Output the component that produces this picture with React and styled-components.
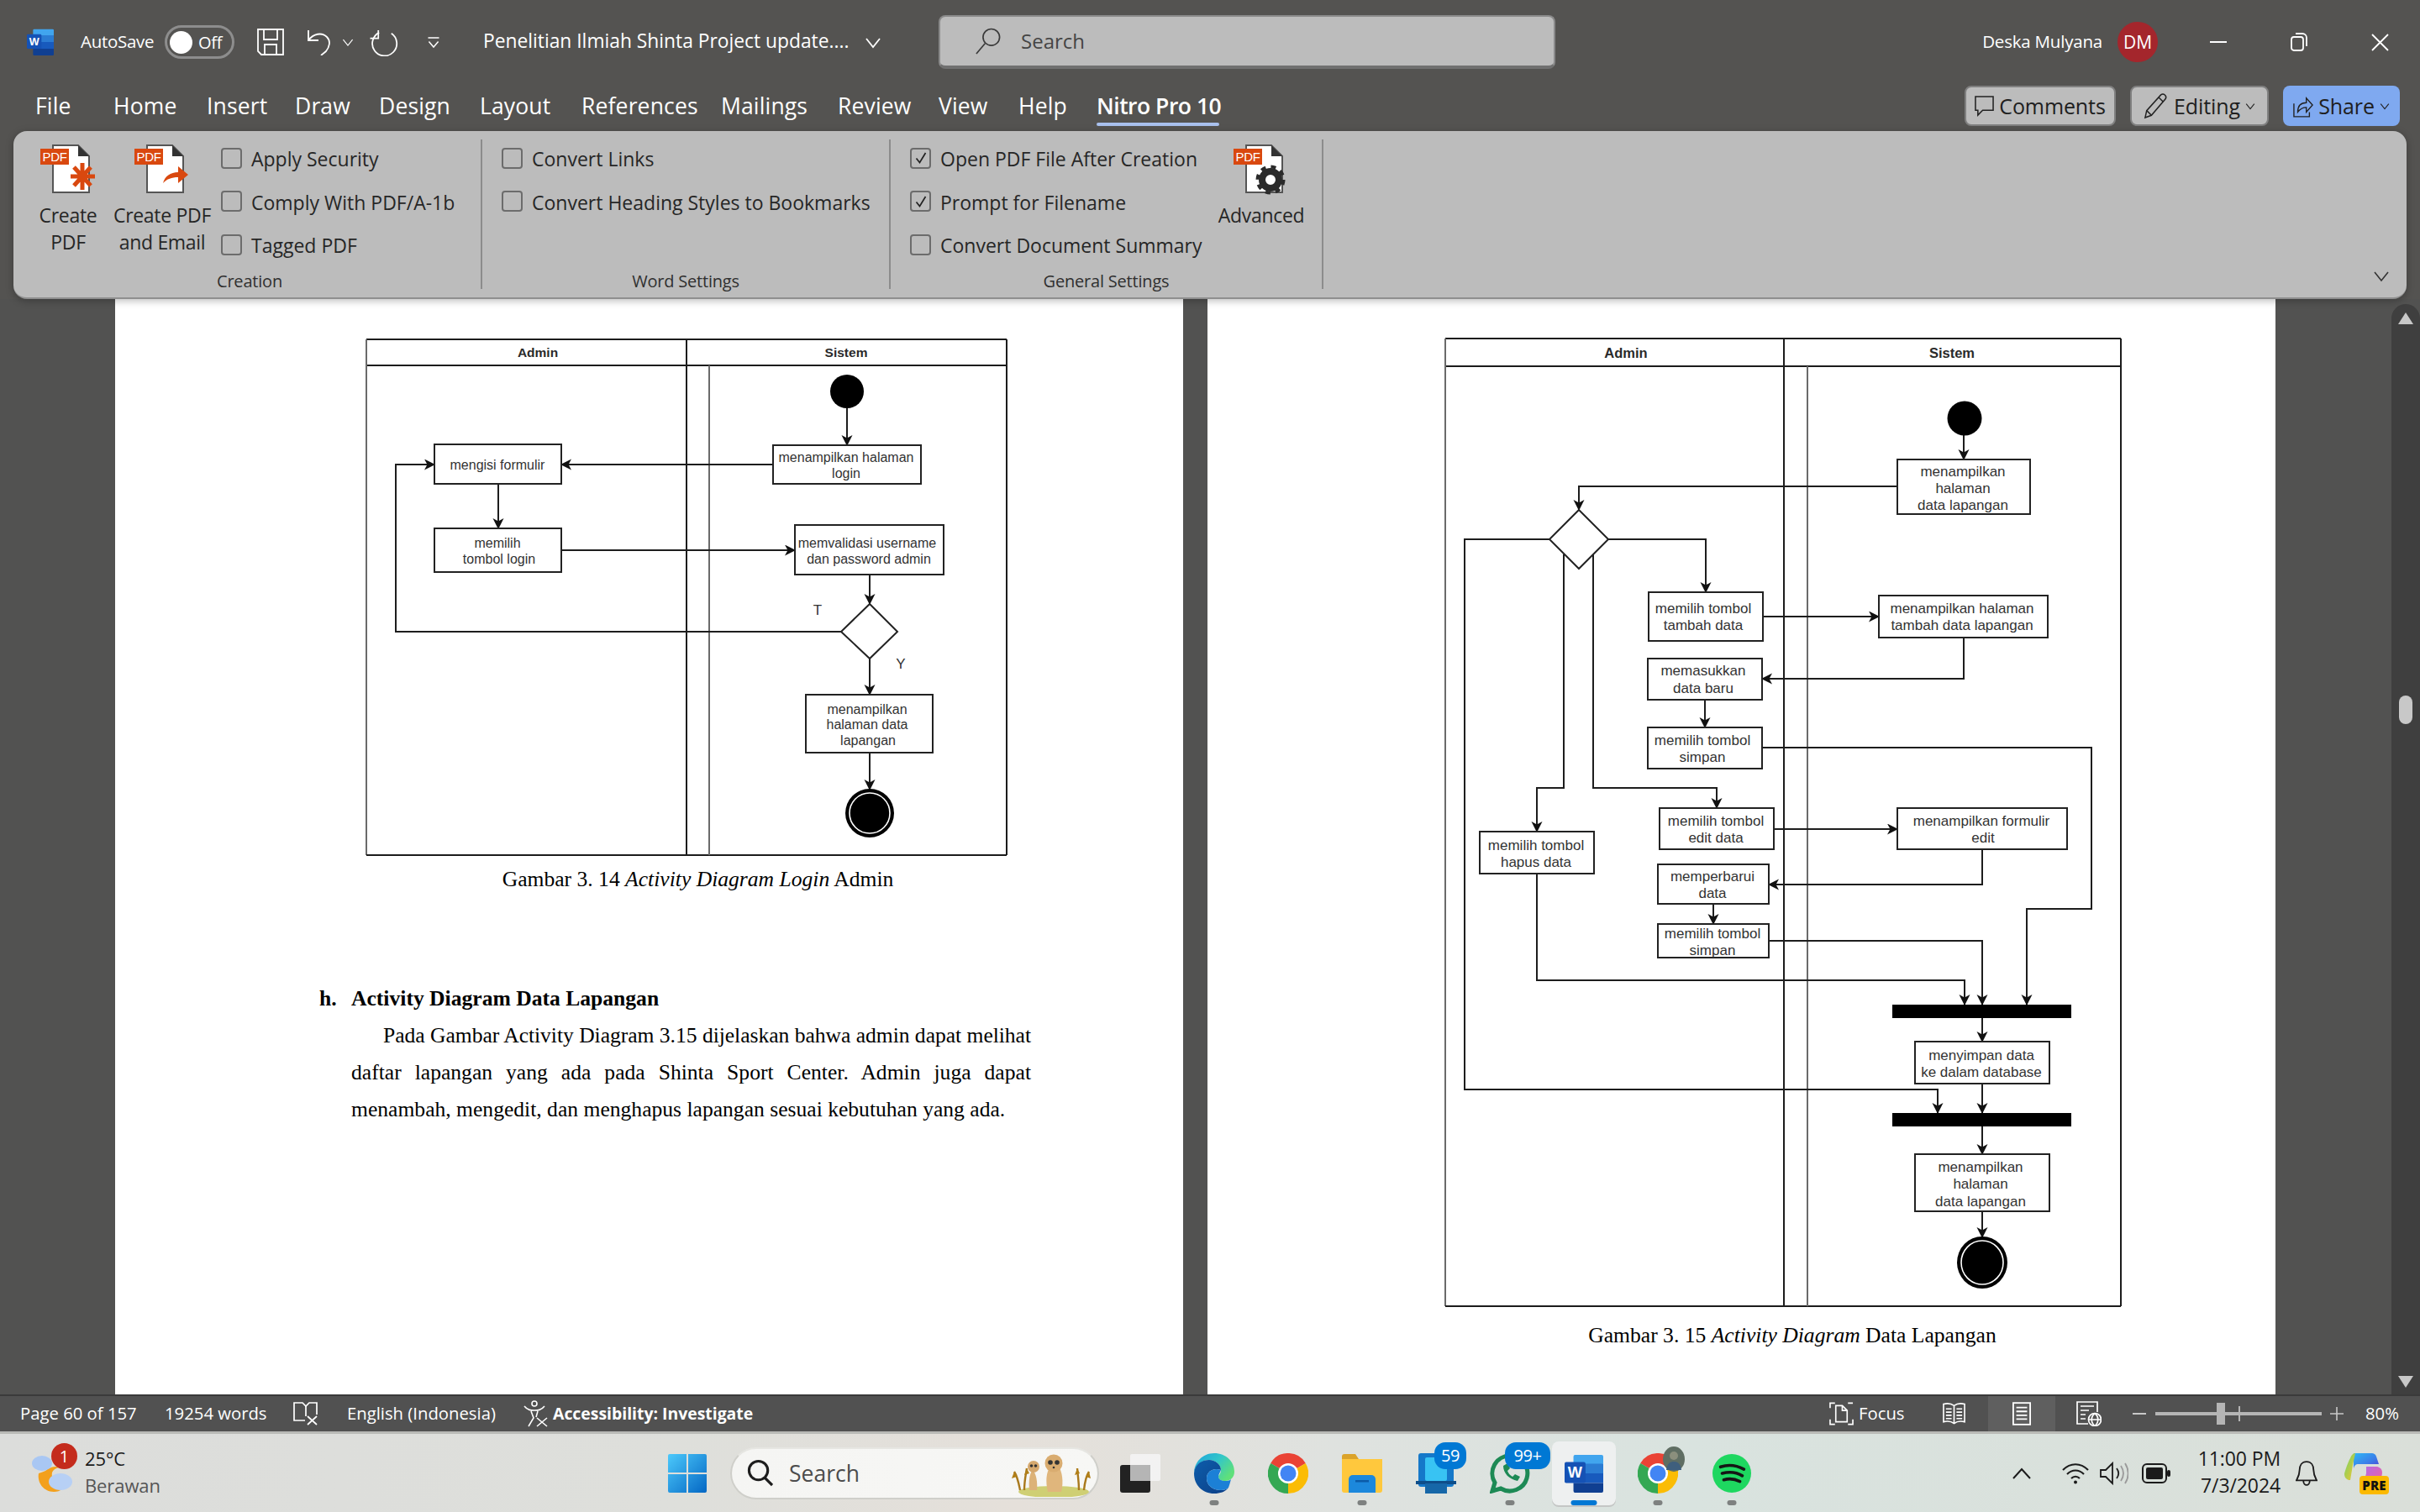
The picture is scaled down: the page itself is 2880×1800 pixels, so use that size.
import React from 'react';
import styled, { createGlobalStyle } from 'styled-components';

const UI = '"Open Sans", "Noto Sans", "Liberation Sans", sans-serif';
const SERIF = '"Liberation Serif", "Times New Roman", serif';

const Global = createGlobalStyle`
  html, body { margin: 0; padding: 0; background: #525252; }
  * { box-sizing: border-box; }
`;

const Screen = styled.div`
  width: 2880px; height: 1800px; display: flex; flex-direction: column; overflow: hidden;
  font-family: ${UI}; background: #525252;
`;
const Header = styled.header`
  height: 356px; flex: none; background: #545351; display: flex; flex-direction: column;
  position: relative; z-index: 2;
`;
const TitleRow = styled.div`
  height: 100px; flex: none; display: flex; align-items: center; padding: 0 37px 0 32px; color: #fff;
`;
const Glyph = styled.svg`
  display: block; flex: none;
  margin-left: ${p => p.$ml || 0}px;
`;
const AutoSaveLabel = styled.span`
  margin-left: 32px; width: 88px; font-size: 20.5px; white-space: nowrap; letter-spacing: -0.3px; padding-bottom: 3px;
`;
const Toggle = styled.div`
  margin-left: 12px; width: 83px; height: 40px; border: 3px solid #8d8d8d; border-radius: 20px;
  display: flex; align-items: center; padding-left: 3px; font-size: 20px; gap: 7px; letter-spacing: -0.3px;
`;
const Knob = styled.span`
  width: 27px; height: 27px; border-radius: 50%; background: #fff; flex: none;
`;
const DocTitle = styled.span`
  margin-left: 51px; width: 446px; font-size: 22.8px; white-space: nowrap; padding-bottom: 3px;
`;
const SearchBox = styled.div`
  margin-left: 68px; width: 734px; height: 64px; background: #bcbcbc; border-radius: 8px;
  border: 2px solid #8a8a8a; border-bottom: 4px solid #707070; display: flex; align-items: center;
  padding-left: 42px; color: #454545; font-size: 24px; gap: 24px;
`;
const SearchHint = styled.span`
  padding-bottom: 2px;
`;
const UserName = styled.span`
  margin-left: auto; font-size: 20.5px; white-space: nowrap; letter-spacing: -0.2px; padding-bottom: 3px;
`;
const Avatar = styled.span`
  margin-left: 18px; width: 48px; height: 48px; border-radius: 50%; background: #a4262c; color: #fff;
  display: flex; align-items: center; justify-content: center; font-size: 21px;
`;
const TabRow = styled.div`
  height: 56px; flex: none; display: flex; align-items: center; padding: 0 24px 4px 42px; color: #fff;
`;
const Tab = styled.div`
  width: ${p => p.$w}px; flex: none; font-size: 26.5px; line-height: 36px; white-space: nowrap;
  letter-spacing: ${p => (p.$active ? '-0.5px' : '0.15px')}; position: relative; font-weight: ${p => (p.$active ? 600 : 400)};
  ${p => p.$active && `&::after { content: ''; position: absolute; left: 0; width: 146px; top: 38px; height: 4px; background: #a9c1ee; border-radius: 2px; }`}
`;
const TabActions = styled.div`
  margin-left: auto; display: flex; gap: 17px;
`;
const ActionButton = styled.div`
  width: ${p => p.$w}px; height: 48px; border-radius: 8px; display: flex; align-items: center; justify-content: center; gap: 6px;
  font-size: 25px; color: #202020; letter-spacing: -0.1px; white-space: nowrap;
  background: ${p => (p.$primary ? '#7fa9f0' : '#bcbcbc')};
  border: ${p => (p.$primary ? 'none' : '2px solid #808080')};
`;
const Ribbon = styled.div`
  height: 200px; flex: none; margin: 0 16px; background: #bcbcbc; border-radius: 16px;
  border-bottom: 2px solid #8f8f8f; display: flex; padding-top: 10px; padding-bottom: 10px; color: #262626;
  box-shadow: 0 2px 10px rgba(0,0,0,.28); position: relative;
`;
const Group = styled.section`
  width: ${p => p.$w}px; flex: none; height: 178px; border-right: 2px solid #8c8c8c; display: flex; flex-direction: column;
`;
const GroupBody = styled.div`
  flex: 1; min-height: 0; display: flex; padding: 6px 0 0 ${p => p.$pl}px;
`;
const GroupLabel = styled.div`
  height: 22px; line-height: 22px; text-align: center; font-size: 20px; color: #303030; letter-spacing: -0.2px; transform: translateY(2px);
  padding-left: ${p => p.$pl || 0}px;
`;
const BigButton = styled.div`
  width: 112px; flex: none; display: flex; flex-direction: column; align-items: center; text-align: center; font-size: 23px; line-height: 32px; letter-spacing: -0.3px; white-space: nowrap;
`;
const BigIconSlot = styled.div`
  height: 62px; margin-bottom: 6px;
`;
const CheckColumn = styled.div`
  width: ${p => (p.$w ? `${p.$w}px` : 'auto')}; margin-left: ${p => p.$ml || 0}px; display: flex; flex-direction: column; gap: 21.5px; padding-top: 2px; flex: none;
`;
const CheckRow = styled.label`
  height: 30px; display: flex; align-items: center; gap: 11px; font-size: 23px; white-space: nowrap;
`;
const CheckBox = styled.span`
  width: 25px; height: 25px; flex: none; border: 2px solid #6c6c6c; border-radius: 4px; display: flex; align-items: center; justify-content: center; margin-top: -2px;
`;
const CollapseBtn = styled.div`
  margin-left: auto; margin-right: 20px; align-self: flex-end; margin-bottom: 6px;
`;
const DocArea = styled.main`
  flex: 1; min-height: 0; display: flex; background: #525251;
`;
const Pages = styled.div`
  flex: 1; min-width: 0; display: flex; gap: 29px; padding-left: 137px;
`;
const Page = styled.article`
  width: 1271px; flex: none; background: #fff; overflow: hidden; color: #000;
`;
const DiagramCanvas = styled.svg`
  display: block; margin: 40px 0 0 ${p => p.$ml}px; font-family: "Liberation Sans", Arial, sans-serif;
`;
const LaneLine = styled.line`
  stroke: ${p => p.$soft ? '#6a6a6a' : '#1c1c1c'}; stroke-width: 2;
`;
const LaneTitle = styled.text`
  font-size: ${p => p.$fs}px; font-weight: 700; fill: #2a2a2a; text-anchor: middle; dominant-baseline: central;
`;
const NodeRect = styled.rect`
  fill: #fff; stroke: #222; stroke-width: 2;
`;
const NodeText = styled.text`
  font-size: ${p => p.$fs}px; fill: #333; text-anchor: middle; dominant-baseline: central;
`;
const Route = styled.polyline`
  fill: none; stroke: #1d1d1d; stroke-width: 2;
`;
const Caption = styled.div`
  font-family: ${SERIF}; font-size: 25.6px; line-height: 44px; text-align: center; padding-left: ${p => p.$pl}px; margin-top: ${p => p.$mt || 0}px; white-space: nowrap;
`;
const Heading = styled.h4`
  margin: 98px 0 0; padding-left: 243px; display: flex; font-family: ${SERIF}; font-size: 25.6px; font-weight: 700; line-height: 44px;
`;
const HeadingMark = styled.span`
  width: 38px; flex: none;
`;
const Body = styled.div`
  padding: 0 181px 0 281px; font-family: ${SERIF}; font-size: 25.6px; line-height: 44.2px;
`;
const BodyLine = styled.div`
  white-space: nowrap; text-align: ${p => (p.$last ? 'left' : 'justify')}; text-align-last: ${p => (p.$last ? 'left' : 'justify')};
  padding-left: ${p => (p.$indent ? 38 : 0)}px; letter-spacing: ${p => (p.$indent ? '-0.04px' : 'normal')};
`;
const ScrollTrack = styled.aside`
  width: 34px; flex: none; background: #3f3f3f; border-radius: 17px 17px 0 0; margin-top: 6px; position: relative; display: flex; flex-direction: column; align-items: center;
`;
const ScrollUp = styled.div`
  margin-top: 10px; width: 0; height: 0; border-left: 9px solid transparent; border-right: 9px solid transparent; border-bottom: 14px solid #c8c8c8;
`;
const ScrollThumb = styled.div`
  margin-top: 442px; width: 16px; height: 34px; border-radius: 8px; background: #c8c8c8;
`;
const ScrollDown = styled.div`
  margin-top: auto; margin-bottom: 8px; width: 0; height: 0; border-left: 9px solid transparent; border-right: 9px solid transparent; border-top: 14px solid #c8c8c8;
`;
const StatusBar = styled.footer`
  height: 44px; flex: none; background: #515151; border-top: 2px solid #3a3a3a; display: flex; align-items: center; color: #fff; font-size: 20.3px; padding-left: 24px;
`;
const StatusText = styled.span`
  margin-left: ${p => p.$ml || 0}px; width: ${p => (p.$w ? `${p.$w}px` : 'auto')}; flex: none; white-space: nowrap;
  font-weight: ${p => (p.$bold ? 700 : 400)}; font-size: ${p => (p.$bold ? '19.4px' : 'inherit')}; padding-bottom: 2px;
`;
const StatusRight = styled.div`
  margin-left: auto; width: 703px; flex: none; display: flex; align-items: center;
`;
const ViewSegment = styled.div`
  margin-left: 27px; width: 80px; height: 42px; background: #5f5f5f; display: flex; align-items: center; justify-content: center;
`;
const ZoomTrack = styled.div`
  margin-left: 11px; width: 198px; height: 4px; background: #b5b5b5; position: relative;
`;
const ZoomThumb = styled.span`
  position: absolute; left: 73px; top: -11px; width: 10px; height: 26px; background: #b5b5b5;
`;
const ZoomTick = styled.span`
  position: absolute; left: 99px; top: -7px; width: 2px; height: 18px; background: #b5b5b5;
`;
const Taskbar = styled.nav`
  height: 96px; flex: none; border-top: 3px solid #b9bab6; display: flex; align-items: center; color: #1b1b1b;
  background: linear-gradient(90deg,#dcdddb 0%,#dedfdb 28%,#e5e0da 42%,#dfe2df 55%,#d9e3df 70%,#dadfd9 100%);
`;
const Weather = styled.div`
  width: 774px; flex: none; display: flex; padding-left: 38px; gap: 15px; align-items: center; position: relative;
`;
const WeatherBadge = styled.span`
  position: absolute; left: 61px; top: -6px; width: 31px; height: 31px; border-radius: 50%; background: #c42b1c; color: #fff; display: flex; align-items: center; justify-content: center; font-size: 20px;
`;
const WeatherText = styled.div`
  display: flex; flex-direction: column; font-size: 22px; line-height: 32px; margin-top: -4px; letter-spacing: -0.1px;
`;
const WeatherSub = styled.span`
  color: #555;
`;
const TaskCell = styled.div`
  width: 88px; height: 76px; flex: none; display: flex; align-items: center; justify-content: center; position: relative;
  ${p => p.$active && `background: #eef0f0; border-radius: 8px; box-shadow: 0 2px 0 #c4c6c5; width: 76px; margin: 0 6px;`}
`;
const RunDot = styled.span`
  position: absolute; bottom: 0; left: 50%; transform: translateX(-50%); width: 11px; height: 6px; border-radius: 3px; background: #7e8180;
`;
const ActiveBar = styled.span`
  position: absolute; bottom: 0; left: 50%; transform: translateX(-50%); width: 31px; height: 6px; border-radius: 3px; background: #0078d4;
`;
const CountBadge = styled.span`
  position: absolute; left: ${p => p.$l}px; top: 1px; height: 32px; width: ${p => p.$w}px; border-radius: 13px; background: #0078d4; color: #fff; font-size: 20px; display: flex; align-items: center; justify-content: center; letter-spacing: -0.4px;
`;
const TaskSearch = styled.div`
  margin: 0 5px 0 7px; width: 439px; height: 62px; flex: none; border-radius: 31px; background: linear-gradient(90deg,#f5f5f3,#f7f7f5); border: 2px solid #cfcfca; border-top-color: #e6e6e2;
  display: flex; align-items: center; padding-left: 18px; gap: 19px; font-size: 26.5px; color: #4c4c4c; position: relative;
`;
const TrayCell = styled.div`
  width: ${p => p.$w}px; margin-left: ${p => p.$ml || 0}px; flex: none; display: flex; align-items: center; justify-content: center;
`;
const Clock = styled.div`
  width: 114px; flex: none; margin: -4px 0 0 12px; text-align: right; font-size: 23px; line-height: 32px; letter-spacing: -0.1px; white-space: nowrap;
`;
const PreBadge = styled.span`
  position: absolute; left: 19px; top: 29px; width: 35px; height: 22px; background: #fbb900; border-radius: 4px; color: #111; font-size: 15px; font-weight: 800; text-align: center; line-height: 22px; letter-spacing: .2px;
`;
const CopilotWrap = styled.div`
  position: relative; width: 52px; height: 52px; margin-left: 24px; flex: none;
`;
const AvatarOverlay = styled.span`
  position: absolute; left: 50px; top: 6px; display: block;
`;
const MeerkatSlot = styled.span`
  position: absolute; left: 333px; top: 5px; display: block;
`;
const Blue = '#185abd';

const WordLogo = ({ size = 32 }) => (
  <Glyph viewBox="0 0 48 48" width={size} height={size}>
    <rect x="11" y="1" width="37" height="12" rx="2" fill="#41a5ee" />
    <rect x="11" y="12" width="37" height="12" fill="#2b7cd3" />
    <rect x="11" y="24" width="37" height="12" fill={Blue} />
    <path d="M11 36h37v10a2 2 0 0 1-2 2H13a2 2 0 0 1-2-2z" fill="#103f91" />
    <rect x="0" y="10" width="26" height="26" rx="2" fill="#1552b5" />
    <text x="13" y="29.5" fontSize="19" fontWeight="700" fill="#fff" textAnchor="middle" fontFamily="Liberation Sans">W</text>
  </Glyph>
);

const PdfDoc = ({ children, pageX = 14 }) => (
  <Glyph viewBox="0 0 66 60" width="66" height="60">
    <path d={`M${pageX + 1} 1h30l13 13v43h-43z`} fill="#fff" stroke="#555" strokeWidth="2" />
    <path d={`M${pageX + 31} 1l13 13h-13z`} fill="#333" />
    <rect x="0" y="5" width="34" height="19" fill="#d9480f" />
    <text x="17" y="20" fontSize="15" fill="#fff" textAnchor="middle" fontFamily="Liberation Sans">PDF</text>
    {children}
  </Glyph>
);

const CheckMark = () => (
  <svg viewBox="0 0 20 20" width="20" height="20"><path d="M4.5 10.5l4 5L15.5 4" fill="none" stroke="#222" strokeWidth="1.7" /></svg>
);
const Check = ({ on, children }) => (
  <CheckRow><CheckBox>{on && <CheckMark />}</CheckBox>{children}</CheckRow>
);
const Chevron = ({ size = 20, stroke = '#fff', w = 1.8, ml }) => (
  <Glyph viewBox="0 0 20 20" width={size} height={size} $ml={ml}><path d="M2 6l8 10 8-10" fill="none" stroke={stroke} strokeWidth={w} /></Glyph>
);

/* Activity diagram */
const Diagram = ({ id, ml, viewBox, width, height, lanes, titles, titleFs, boxes, fs, routes, children }) => (
  <DiagramCanvas $ml={ml} viewBox={viewBox} width={width} height={height}>
    <defs>
      <marker id={id} markerUnits="userSpaceOnUse" markerWidth="14" markerHeight="14" refX="12" refY="6.5" orient="auto">
        <path d="M13 6.5L0 0l3.5 6.5L0 13z" fill="#111" />
      </marker>
    </defs>
    {lanes.map(([x1, y1, x2, y2, soft], i) => <LaneLine key={i} x1={x1} y1={y1} x2={x2} y2={y2} $soft={soft} />)}
    {titles.map(([t, x, y]) => <LaneTitle key={t} x={x} y={y} $fs={titleFs}>{t}</LaneTitle>)}
    {routes.map((r, i) => (
      <Route key={i} points={r.p.map(q => q.join(',')).join(' ')} markerEnd={r.open ? undefined : `url(#${id})`} />
    ))}
    {boxes.map((b, i) => (
      <g key={i}>
        <NodeRect x={b.x} y={b.y} width={b.w} height={b.h} />
        {b.t.map(([line, cx, cy]) => <NodeText key={line} x={cx} y={cy} $fs={fs}>{line}</NodeText>)}
      </g>
    ))}
    {children}
  </DiagramCanvas>
);

const Diamond = ({ cx, cy, l, r, t, b }) => (
  <polygon points={`${cx},${t} ${r},${cy} ${cx},${b} ${l},${cy}`} fill="#fff" stroke="#222" strokeWidth="2" />
);
const EndNode = ({ cx, cy, rx, ry }) => (
  <g>
    <ellipse cx={cx} cy={cy} rx={rx} ry={ry} fill="#000" />
    <ellipse cx={cx} cy={cy} rx={rx - 5} ry={ry - 5} fill="none" stroke="#fff" strokeWidth="1.6" />
  </g>
);

const D1 = {
  lanes: [[436, 404, 1198, 404], [436, 435, 1198, 435], [436, 404, 436, 1018, true], [1198, 404, 1198, 1018], [436, 1018, 1198, 1018], [817, 404, 817, 1018], [844, 435, 844, 1018, true]],
  titles: [['Admin', 640, 419], ['Sistem', 1007, 419]],
  routes: [
    { p: [[1008, 486], [1008, 530]] },
    { p: [[920, 553], [668, 553]] },
    { p: [[1001, 752], [471, 752], [471, 553], [517, 553]] },
    { p: [[593, 576], [593, 629]] },
    { p: [[668, 655], [946, 655]] },
    { p: [[1035, 684], [1035, 719]] },
    { p: [[1035, 784], [1035, 827]] },
    { p: [[1035, 896], [1035, 940]] },
  ],
  boxes: [
    { x: 920, y: 530, w: 176, h: 46, t: [['menampilkan halaman', 1007, 544], ['login', 1007, 563]] },
    { x: 517, y: 529, w: 151, h: 47, t: [['mengisi formulir', 592, 553]] },
    { x: 517, y: 629, w: 151, h: 52, t: [['memilih', 592, 646], ['tombol login', 594, 665]] },
    { x: 946, y: 625, w: 177, h: 59, t: [['memvalidasi username', 1032, 646], ['dan password admin', 1034, 665]] },
    { x: 959, y: 827, w: 151, h: 69, t: [['menampilkan', 1032, 844], ['halaman data', 1032, 862], ['lapangan', 1033, 881]] },
  ],
};
const D2 = {
  lanes: [[1720, 403, 2524, 403], [1720, 436, 2524, 436], [1720, 403, 1720, 1555, true], [2524, 403, 2524, 1555], [1720, 1555, 2524, 1555], [2123, 403, 2123, 1555], [2151, 436, 2151, 1555, true]],
  titles: [['Admin', 1935, 420], ['Sistem', 2323, 420]],
  routes: [
    { p: [[2337, 518], [2337, 547]] },
    { p: [[2258, 579], [1879, 579], [1879, 607]] },
    { p: [[1844, 642], [1743, 642], [1743, 1297], [2306, 1297], [2306, 1325]] },
    { p: [[1914, 642], [2030, 642], [2030, 705]] },
    { p: [[2098, 734], [2236, 734]] },
    { p: [[2337, 759], [2337, 808], [2097, 808]] },
    { p: [[2029, 833], [2029, 866]] },
    { p: [[2097, 890], [2489, 890], [2489, 1082], [2412, 1082], [2412, 1196]] },
    { p: [[1861, 660], [1861, 938], [1829, 938], [1829, 990]] },
    { p: [[1829, 1040], [1829, 1167], [2338, 1167], [2338, 1196]] },
    { p: [[1896, 660], [1896, 938], [2043, 938], [2043, 962]] },
    { p: [[2111, 987], [2258, 987]] },
    { p: [[2359, 1011], [2359, 1053], [2105, 1053]] },
    { p: [[2039, 1076], [2039, 1100]] },
    { p: [[2105, 1120], [2359, 1120], [2359, 1196]] },
    { p: [[2359, 1211], [2359, 1240]] },
    { p: [[2359, 1290], [2359, 1325]] },
    { p: [[2359, 1341], [2359, 1374]] },
    { p: [[2359, 1442], [2359, 1473]] },
  ],
  boxes: [
    { x: 2258, y: 547, w: 158, h: 65, t: [['menampilkan', 2336, 561], ['halaman', 2336, 581], ['data lapangan', 2336, 601]] },
    { x: 1962, y: 705, w: 136, h: 58, t: [['memilih tombol', 2027, 724], ['tambah data', 2027, 744]] },
    { x: 2236, y: 709, w: 201, h: 50, t: [['menampilkan halaman', 2335, 724], ['tambah data lapangan', 2335, 744]] },
    { x: 1961, y: 784, w: 136, h: 49, t: [['memasukkan', 2027, 798], ['data baru', 2027, 819]] },
    { x: 1961, y: 866, w: 136, h: 49, t: [['memilih tombol', 2026, 881], ['simpan', 2026, 901]] },
    { x: 1975, y: 962, w: 136, h: 49, t: [['memilih tombol', 2042, 977], ['edit data', 2042, 997]] },
    { x: 2258, y: 962, w: 202, h: 49, t: [['menampilkan formulir', 2358, 977], ['edit', 2360, 997]] },
    { x: 1761, y: 990, w: 136, h: 50, t: [['memilih tombol', 1828, 1006], ['hapus data', 1828, 1026]] },
    { x: 1973, y: 1029, w: 132, h: 47, t: [['memperbarui', 2038, 1043], ['data', 2038, 1063]] },
    { x: 1973, y: 1100, w: 132, h: 40, t: [['memilih tombol', 2038, 1111], ['simpan', 2038, 1131]] },
    { x: 2279, y: 1240, w: 160, h: 50, t: [['menyimpan data', 2358, 1256], ['ke dalam database', 2358, 1276]] },
    { x: 2279, y: 1374, w: 160, h: 68, t: [['menampilkan', 2357, 1389], ['halaman', 2357, 1409], ['data lapangan', 2357, 1430]] },
  ],
};

const Chrome = ({ size = 48 }) => (
  <Glyph viewBox="0 0 48 48" width={size} height={size}>
    <path d="M24 24L3.2 12A24 24 0 0 1 44.8 12z" fill="#ea4335" />
    <path d="M24 24L44.8 12A24 24 0 0 1 24 48z" fill="#fbbc04" />
    <path d="M24 24L24 48A24 24 0 0 1 3.2 12z" fill="#34a853" />
    <circle cx="24" cy="24" r="12" fill="#fff" />
    <circle cx="24" cy="24" r="9.5" fill="#4285f4" />
  </Glyph>
);

const MeerkatArt = () => (
  <MeerkatSlot>
    <svg viewBox="0 0 94 52" width="94" height="52">
      <ellipse cx="50" cy="46" rx="42" ry="7" fill="#cfcf74" />
      <path d="M10 44c-2-10-3-16-7-22M15 44c0-10 1-14 3-26M86 44c1-10 2-16 6-22M80 44c0-10-1-14-2-26" stroke="#a9791d" strokeWidth="2.4" fill="none" />
      <path d="M3 22l-3 8 6-2zM18 18l-3 8 6-2zM92 22l2 8-6-2zM78 18l-3 8 6-2z" fill="#b17f18" />
      <path d="M21 44c-1-10 0-20 4-24 4 4 6 14 5 24z" fill="#dcb278" />
      <circle cx="26" cy="16" r="7" fill="#d5a86e" /><circle cx="23.5" cy="15" r="1.8" fill="#333" /><circle cx="28.5" cy="15" r="1.8" fill="#333" />
      <path d="M43 46c-3-12-2-24 3-30h10c4 6 6 18 3 30z" fill="#e0b67c" />
      <circle cx="50" cy="12" r="10.5" fill="#d9ac70" /><circle cx="46" cy="11" r="2.8" fill="#333" /><circle cx="54" cy="11" r="2.8" fill="#333" /><circle cx="50" cy="17" r="1.3" fill="#333" />
    </svg>
  </MeerkatSlot>
);

const TABS = [['File', 93], ['Home', 111], ['Insert', 105], ['Draw', 100], ['Design', 120], ['Layout', 121], ['References', 166], ['Mailings', 139], ['Review', 120], ['View', 95], ['Help', 93]];

export default function App() {
  return (
    <Screen>
      <Global />
      <Header>
        <TitleRow>
          <WordLogo size={32} />
          <AutoSaveLabel>AutoSave</AutoSaveLabel>
          <Toggle><Knob />Off</Toggle>
          <Glyph $ml={27} viewBox="0 0 32 32" width="32" height="32" fill="none" stroke="#fff" strokeWidth="1.8">
            <path d="M1 1h30v30H5l-4-4z" /><path d="M8 1v12h16V1M9 31V19h14v12" />
          </Glyph>
          <Glyph $ml={27} viewBox="0 0 30 32" width="30" height="32" fill="none" stroke="#fff" strokeWidth="1.8">
            <path d="M2 2v12h12" /><path d="M2 14C8 6 18 4 24 10c5 5 3 12-1 17l-6 5" />
          </Glyph>
          <Chevron size={14} ml={12} w={1.6} />
          <Glyph $ml={19} viewBox="0 0 36 34" width="36" height="33" fill="none" stroke="#fff" strokeWidth="1.8">
            <path d="M10 2v10H0" /><path d="M11 4A15 15 0 1 0 26 5" transform="translate(0 1)" />
          </Glyph>
          <Glyph $ml={32} viewBox="0 0 16 14" width="16" height="13" fill="none" stroke="#fff" strokeWidth="1.6">
            <path d="M1 1h14M2 6l6 7 6-7" />
          </Glyph>
          <DocTitle>Penelitian Ilmiah Shinta Project update....</DocTitle>
          <Chevron size={20} ml={8} />
          <SearchBox>
            <Glyph viewBox="0 0 32 34" width="30" height="32" fill="none" stroke="#3a3a3a" strokeWidth="1.8">
              <circle cx="20" cy="12" r="10.5" /><path d="M12 20L1 33" />
            </Glyph>
            <SearchHint>Search</SearchHint>
          </SearchBox>
          <UserName>Deska Mulyana</UserName>
          <Avatar>DM</Avatar>
          <Glyph $ml={62} viewBox="0 0 20 4" width="20" height="4"><rect width="20" height="2" y="1" fill="#fff" /></Glyph>
          <Glyph $ml={76} viewBox="0 0 20 22" width="20" height="22" fill="none" stroke="#fff" strokeWidth="1.8">
            <rect x="1" y="5" width="14" height="16" rx="3" /><path d="M6 1h8a5 5 0 0 1 5 5v10" />
          </Glyph>
          <Glyph $ml={76} viewBox="0 0 21 21" width="21" height="21" fill="none" stroke="#fff" strokeWidth="1.8">
            <path d="M1 1l19 19M20 1L1 20" />
          </Glyph>
        </TitleRow>
        <TabRow>
          {TABS.map(([t, w]) => <Tab key={t} $w={w}>{t}</Tab>)}
          <Tab $w={145} $active>Nitro Pro 10</Tab>
          <TabActions>
            <ActionButton $w={180}>
              <Glyph viewBox="0 0 24 26" width="23" height="25" fill="none" stroke="#222" strokeWidth="1.6"><path d="M1 1h22v17H10l-6 6v-6H1z" /></Glyph>
              Comments
            </ActionButton>
            <ActionButton $w={165}>
              <Glyph viewBox="0 0 32 34" width="30" height="34" fill="none" stroke="#222" strokeWidth="1.6"><path d="M2 32l2-9L22 3a4 4 0 0 1 6 5L10 29z" /><path d="M19 6l6 6M4 23l6 6" /></Glyph>
              Editing
              <Chevron size={12} stroke="#222" w={1.8} />
            </ActionButton>
            <ActionButton $w={139} $primary>
              <Glyph viewBox="0 0 26 30" width="24" height="30" fill="none" stroke="#222" strokeWidth="1.5"><path d="M1 12v17h20v-6" /><path d="M6 23c0-9 5-12 11-12V5l8 9-8 9v-6c-5 0-8 2-11 6z" /></Glyph>
              Share
              <Chevron size={12} stroke="#222" w={1.8} />
            </ActionButton>
          </TabActions>
        </TabRow>
        <Ribbon>
          <Group $w={558}>
            <GroupBody $pl={9}>
              <BigButton>
                <BigIconSlot>
                  <PdfDoc>
                    <path d="M50 22v32M36 38h29M40 27l20 22M60 27L40 49" stroke="#d9480f" strokeWidth="5" fill="none" />
                  </PdfDoc>
                </BigIconSlot>
                Create<br />PDF
              </BigButton>
              <BigButton>
                <BigIconSlot>
                  <PdfDoc>
                    <path d="M34 46c2-8 9-13 18-13v-7l12 10-12 10v-7c-8 0-13 2-18 7z" fill="#d9480f" />
                  </PdfDoc>
                </BigIconSlot>
                Create PDF<br />and Email
              </BigButton>
              <CheckColumn $ml={14}>
                <Check>Apply Security</Check>
                <Check>Comply With PDF/A-1b</Check>
                <Check>Tagged PDF</Check>
              </CheckColumn>
            </GroupBody>
            <GroupLabel $pl={6}>Creation</GroupLabel>
          </Group>
          <Group $w={486}>
            <GroupBody $pl={23}>
              <CheckColumn>
                <Check>Convert Links</Check>
                <Check>Convert Heading Styles to Bookmarks</Check>
              </CheckColumn>
            </GroupBody>
            <GroupLabel>Word Settings</GroupLabel>
          </Group>
          <Group $w={515}>
            <GroupBody $pl={23}>
              <CheckColumn $w={362}>
                <Check on>Open PDF File After Creation</Check>
                <Check on>Prompt for Filename</Check>
                <Check>Convert Document Summary</Check>
              </CheckColumn>
              <BigButton>
                <BigIconSlot>
                  <PdfDoc>
                    <circle cx="44" cy="42" r="10" fill="none" stroke="#2a2a2a" strokeWidth="8" />
                    <circle cx="44" cy="42" r="15.5" fill="none" stroke="#2a2a2a" strokeWidth="4" strokeDasharray="6 6.17" />
                  </PdfDoc>
                </BigIconSlot>
                Advanced
              </BigButton>
            </GroupBody>
            <GroupLabel>General Settings</GroupLabel>
          </Group>
          <CollapseBtn><Chevron size={20} stroke="#333" w={1.6} /></CollapseBtn>
        </Ribbon>
      </Header>
      <DocArea>
        <Pages>
          <Page>
            <Diagram id="arrow-a" ml={293} viewBox="430 396 775 630" width="775" height="630" fs={16} titleFs={15.5} {...D1}>
              <circle cx="1008" cy="466" r="20" fill="#000" />
              <Diamond cx={1035} cy={752} l={1001} r={1068} t={719} b={784} />
              <NodeText x={973} y={726} $fs={17}>T</NodeText>
              <NodeText x={1072} y={790} $fs={17}>Y</NodeText>
              <EndNode cx={1035} cy={968} rx={29} ry={29} />
            </Diagram>
            <Caption $pl={116} $mt={-1}>Gambar 3. 14 <i>Activity Diagram Login</i> Admin</Caption>
            <Heading><HeadingMark>h.</HeadingMark>Activity Diagram Data Lapangan</Heading>
            <Body>
              <BodyLine $indent>Pada Gambar Activity Diagram 3.15 dijelaskan bahwa admin dapat melihat</BodyLine>
              <BodyLine>daftar lapangan yang ada pada Shinta Sport Center. Admin juga dapat</BodyLine>
              <BodyLine $last>menambah, mengedit, dan menghapus lapangan sesuai kebutuhan yang ada.</BodyLine>
            </Body>
          </Page>
          <Page>
            <Diagram id="arrow-b" ml={277} viewBox="1714 396 816 1170" width="816" height="1170" fs={17} titleFs={16.5} {...D2}>
              <circle cx="2338" cy="498" r="20.5" fill="#000" />
              <Diamond cx={1879} cy={642} l={1844} r={1914} t={607} b={677} />
              <rect x="2252" y="1196" width="213" height="16" fill="#000" />
              <rect x="2252" y="1325" width="213" height="16" fill="#000" />
              <EndNode cx={2359} cy={1503} rx={30} ry={31} />
            </Diagram>
            <Caption $pl={121} $mt={2}>Gambar 3. 15 <i>Activity Diagram</i> Data Lapangan</Caption>
          </Page>
        </Pages>
        <ScrollTrack>
          <ScrollUp />
          <ScrollThumb />
          <ScrollDown />
        </ScrollTrack>
      </DocArea>
      <StatusBar>
        <StatusText $w={172}>Page 60 of 157</StatusText>
        <StatusText $w={153}>19254 words</StatusText>
        <Glyph viewBox="0 0 30 28" width="30" height="28" fill="none" stroke="#fff" strokeWidth="1.7">
          <path d="M14 22H1V1h10l4 4 4-4h9v14" /><path d="M15 5v12M17 17l11 10M28 17L17 27" />
        </Glyph>
        <StatusText $ml={34} $w={209}>English (Indonesia)</StatusText>
        <Glyph viewBox="0 0 30 32" width="30" height="32" fill="none" stroke="#fff" strokeWidth="1.6">
          <circle cx="14" cy="4" r="3" /><path d="M2 7c4 5 8 5 12 5s8 0 12-5M10 13l3 8-6 10M18 13l-2 7M17 21l12 10M29 21L17 31" />
        </Glyph>
        <StatusText $ml={6} $bold>Accessibility: Investigate</StatusText>
        <StatusRight>
          <Glyph viewBox="0 0 30 28" width="29" height="28" fill="none" stroke="#fff" strokeWidth="1.7">
            <path d="M1 7V1h6M23 1h6v0M1 21v6h6M23 27h6v-6" /><path d="M8 4h8l6 6v14H8z" /><path d="M16 4v6h6" />
          </Glyph>
          <StatusText $ml={6} $w={100}>Focus</StatusText>
          <Glyph viewBox="0 0 28 28" width="27" height="28" fill="none" stroke="#fff" strokeWidth="1.7">
            <path d="M14 4C10 1 5 1 1 2v22c4-1 9-1 13 2 4-3 9-3 13-2V2c-4-1-9-1-13 2zM14 4v22" /><path d="M4 8h7M4 12h7M4 16h7M4 20h7M17 8h7M17 12h7M17 16h7M17 20h7" />
          </Glyph>
          <ViewSegment>
            <Glyph viewBox="0 0 24 30" width="22" height="30" fill="none" stroke="#fff" strokeWidth="2">
              <rect x="1" y="1" width="22" height="28" /><path d="M5 7h14M5 12h14M5 17h14M5 22h14" />
            </Glyph>
          </ViewSegment>
          <Glyph $ml={25} viewBox="0 0 30 30" width="30" height="30" fill="none" stroke="#fff" strokeWidth="1.7">
            <path d="M14 27H1V1h24v12" /><path d="M5 6h16M5 11h10M5 16h6M5 21h6" />
            <circle cx="22" cy="22" r="7.5" fill="#515151" /><path d="M14.5 22h15M22 14.5c-5 4-5 11 0 15M22 14.5c5 4 5 11 0 15" />
          </Glyph>
          <Glyph $ml={37} viewBox="0 0 16 4" width="16" height="4"><rect width="16" height="2" y="1" fill="#c8c8c8" /></Glyph>
          <ZoomTrack><ZoomThumb /><ZoomTick /></ZoomTrack>
          <Glyph $ml={10} viewBox="0 0 16 16" width="16" height="16"><path d="M8 0v16M0 8h16" stroke="#c8c8c8" strokeWidth="1.6" /></Glyph>
          <StatusText $ml={26}>80%</StatusText>
        </StatusRight>
      </StatusBar>
      <Taskbar>
        <Weather>
          <Glyph viewBox="0 0 48 46" width="48" height="46">
            <path d="M8 23C6 34 14 45 26 45c8 0 14-5 16-11-10 4-20-2-18-12 1-3 4-5 8-6-6-3-12 1-16 4-2 1-5 2-8 3z" fill="#f3a01c" />
            <ellipse cx="12" cy="11" rx="12" ry="9" fill="#a9c7f3" />
            <ellipse cx="34" cy="33" rx="14" ry="10" fill="#b7d0f5" />
          </Glyph>
          <WeatherBadge>1</WeatherBadge>
          <WeatherText>25°C<WeatherSub>Berawan</WeatherSub></WeatherText>
        </Weather>
        <TaskCell>
          <Glyph viewBox="0 0 46 46" width="46" height="46">
            <defs><linearGradient id="win" x1="0" y1="0" x2="1" y2="1"><stop offset="0" stopColor="#4cc9fb" /><stop offset="1" stopColor="#0467c4" /></linearGradient></defs>
            <path d="M0 2a2 2 0 0 1 2-2h20v22H0zM24 0h20a2 2 0 0 1 2 2v20H24zM0 24h22v22H2a2 2 0 0 1-2-2zM24 24h22v20a2 2 0 0 1-2 2H24z" fill="url(#win)" />
          </Glyph>
        </TaskCell>
        <TaskSearch>
          <Glyph viewBox="0 0 32 34" width="31" height="33" fill="none" stroke="#1d1d1d" strokeWidth="3.2">
            <circle cx="14" cy="14" r="11.5" /><path d="M22 23l9 9" />
          </Glyph>
          Search
          <MeerkatArt />
        </TaskSearch>
        <TaskCell>
          <Glyph viewBox="0 0 48 46" width="48" height="46">
            <rect x="0" y="13" width="36" height="33" rx="3" fill="#222" />
            <rect x="12" y="0" width="36" height="32" rx="2" fill="#f4f4f4" fillOpacity=".9" />
            <rect x="12" y="13" width="24" height="19" fill="#b5b5b5" />
          </Glyph>
        </TaskCell>
        <TaskCell>
          <Glyph viewBox="0 0 48 48" width="48" height="48">
            <defs>
              <linearGradient id="edgeA" x1="0" y1="0" x2="1" y2=".6"><stop offset="0" stopColor="#1ba3dd" /><stop offset=".55" stopColor="#33c6c9" /><stop offset="1" stopColor="#5fe07a" /></linearGradient>
              <linearGradient id="edgeB" x1="0" y1="0" x2="1" y2="1"><stop offset="0" stopColor="#0d5dab" /><stop offset="1" stopColor="#0c3f87" /></linearGradient>
            </defs>
            <path d="M24 0C38 0 48 10 48 22c0 7-5 11-11 11-4 0-8-2-8-5 0-2 3-3 3-8 0-7-7-12-14-12C9 8 1 14 0 24 0 11 10 0 24 0z" fill="url(#edgeA)" />
            <path d="M0 24C1 12 10 8 18 8c7 0 14 5 14 12-8-3-17 1-17 10 0 8 7 14 17 14 4 0 7-1 9-3-4 5-10 7-17 7C10 48 0 38 0 24z" fill="url(#edgeB)" />
            <path d="M15 30c0-9 9-13 17-10-1 3-3 5-3 8 0 3 4 5 8 5 2 0 5 0 7-2-1 4-2 7-3 10-2 2-5 3-9 3-10 0-17-6-17-14z" fill="#1c80d6" />
          </Glyph>
          <RunDot />
        </TaskCell>
        <TaskCell><Chrome /></TaskCell>
        <TaskCell>
          <Glyph viewBox="0 0 48 46" width="48" height="46">
            <path d="M0 3a3 3 0 0 1 3-3h13l4 6h-20z" fill="#dba32a" />
            <path d="M0 6h48v37a3 3 0 0 1-3 3H3a3 3 0 0 1-3-3z" fill="#ffc83d" />
            <path d="M8 30a5 5 0 0 1 5-5h22a5 5 0 0 1 5 5v16H8z" fill="#1c88dc" />
            <rect x="16" y="31" width="16" height="2.5" fill="#0b5ba8" />
          </Glyph>
          <RunDot />
        </TaskCell>
        <TaskCell>
          <Glyph viewBox="0 0 48 48" width="48" height="48">
            <rect x="3" y="0" width="42" height="40" rx="3" fill="#1578c9" />
            <rect x="11" y="5" width="26" height="28" rx="2" fill="#38c3f3" />
            <rect x="0" y="33" width="48" height="4" fill="#0e4e8a" />
            <rect x="11" y="36" width="26" height="12" fill="#1667a8" />
          </Glyph>
          <CountBadge $l={42} $w={38}>59</CountBadge>
        </TaskCell>
        <TaskCell>
          <Glyph viewBox="0 0 48 48" width="48" height="48" fill="none" stroke="#1d8a55" strokeWidth="5">
            <path d="M24 3a21 21 0 1 1-11 39l-10 3 3-10A21 21 0 0 1 24 3z" />
            <path d="M16 15c0 9 7 16 17 18l3-5-6-3-3 3c-3-2-5-4-6-7l3-3-3-6z" fill="#1d8a55" stroke="none" />
          </Glyph>
          <CountBadge $l={38} $w={54}>99+</CountBadge>
          <RunDot />
        </TaskCell>
        <TaskCell $active>
          <WordLogo size={46} />
          <ActiveBar />
        </TaskCell>
        <TaskCell>
          <Chrome />
          <AvatarOverlay>
            <svg viewBox="0 0 26 30" width="26" height="30">
              <ellipse cx="13" cy="15" rx="13" ry="15" fill="#5f6e63" />
              <circle cx="13" cy="11" r="5" fill="#8b8f7d" />
              <path d="M4 28c1-8 5-10 9-10s8 2 9 10z" fill="#3f5f7d" />
            </svg>
          </AvatarOverlay>
          <RunDot />
        </TaskCell>
        <TaskCell>
          <Glyph viewBox="0 0 48 48" width="46" height="46">
            <circle cx="24" cy="24" r="24" fill="#1ed760" />
            <path d="M10 16c9-3 20-2 29 3M12 24c8-2 17-2 25 3M14 32c7-2 14-1 20 2" fill="none" stroke="#151515" strokeWidth="3.8" strokeLinecap="round" />
          </Glyph>
          <RunDot />
        </TaskCell>
        <TrayCell $w={40} $ml={281}>
          <Glyph viewBox="0 0 22 14" width="22" height="14"><path d="M1 13l10-11 10 11" fill="none" stroke="#1b1b1b" strokeWidth="2" /></Glyph>
        </TrayCell>
        <TrayCell $w={44} $ml={22}>
          <Glyph viewBox="0 0 34 26" width="34" height="26" fill="none" stroke="#1b1b1b" strokeWidth="2.2">
            <path d="M2 9c9-9 21-9 30 0M7 14c6-6 14-6 20 0M12 19c3-3 7-3 10 0" /><circle cx="17" cy="23.5" r="2" fill="#1b1b1b" stroke="none" />
          </Glyph>
        </TrayCell>
        <TrayCell $w={44} $ml={2}>
          <Glyph viewBox="0 0 34 28" width="34" height="28" fill="none" stroke="#1b1b1b" strokeWidth="1.8">
            <path d="M1 10h6l8-8v24l-8-8H1z" /><path d="M20 8c3 4 3 8 0 12" />
            <path d="M25 5c4 6 4 12 0 18M30 2c5 8 5 16 0 24" stroke="#9a9a9a" />
          </Glyph>
        </TrayCell>
        <TrayCell $w={44} $ml={6}>
          <Glyph viewBox="0 0 34 24" width="34" height="24">
            <rect x="1" y="1" width="28" height="22" rx="5" fill="none" stroke="#1b1b1b" strokeWidth="2" />
            <rect x="5" y="5" width="20" height="14" rx="2" fill="#1b1b1b" />
            <rect x="30" y="8" width="4" height="8" rx="2" fill="#1b1b1b" />
          </Glyph>
        </TrayCell>
        <Clock>11:00 PM<br />7/3/2024</Clock>
        <TrayCell $w={40} $ml={11}>
          <Glyph viewBox="0 0 28 32" width="26" height="30" fill="none" stroke="#1b1b1b" strokeWidth="2">
            <path d="M14 1c-6 0-9 5-9 11 0 6-2 9-4 13h26c-2-4-4-7-4-13 0-6-3-11-9-11zM10 26c0 3 2 5 4 5s4-2 4-5" />
          </Glyph>
        </TrayCell>
        <CopilotWrap>
          <Glyph viewBox="0 0 46 46" width="46" height="46">
            <defs>
              <linearGradient id="coA" x1="0" y1="0" x2="1" y2="1"><stop offset="0" stopColor="#2fb7f5" /><stop offset=".6" stopColor="#3b7de8" /><stop offset="1" stopColor="#4d3fd2" /></linearGradient>
              <linearGradient id="coB" x1="0" y1="0" x2="1" y2="1"><stop offset="0" stopColor="#b36ae8" /><stop offset="1" stopColor="#f2629a" /></linearGradient>
              <linearGradient id="coC" x1="0" y1="0" x2="1" y2="1"><stop offset="0" stopColor="#6bd46a" /><stop offset="1" stopColor="#f6c62f" /></linearGradient>
            </defs>
            <path d="M12 2h22c2 0 4 1 5 4l3 9H18c-4 0-5 2-6 5z" fill="url(#coA)" />
            <path d="M8 8c1-3 3-6 6-6l-3 14-3 18c-4 0-7-3-7-7 0-2 5-16 7-19z" fill="url(#coC)" />
            <path d="M27 18h12c3 0 7 2 7 7 0 4-3 14-8 16H23l4-15z" fill="url(#coB)" />
          </Glyph>
          <PreBadge>PRE</PreBadge>
        </CopilotWrap>
      </Taskbar>
    </Screen>
  );
}
